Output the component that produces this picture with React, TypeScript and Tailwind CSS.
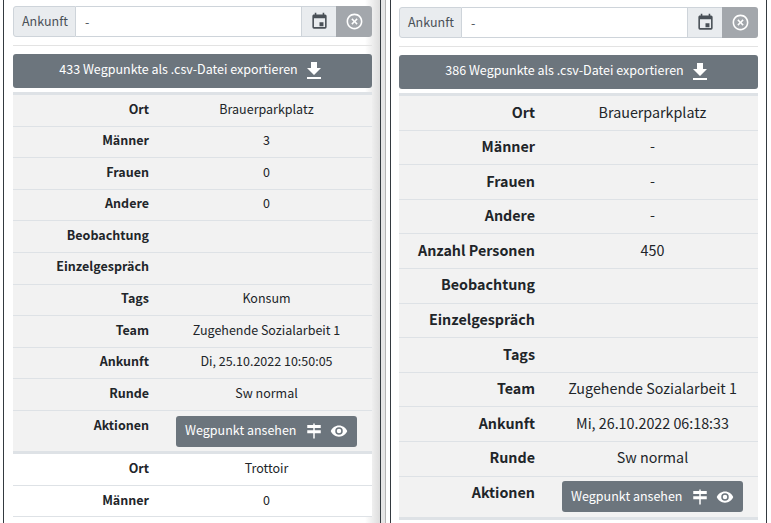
import React from "react";

function Cal() {
  return (
    <svg viewBox="0 0 24 24" className="w-[19px] h-[19px]" fill="currentColor">
      <path d="M19 3h-1V1h-2v2H8V1H6v2H5c-1.11 0-2 .9-2 2v14a2 2 0 0 0 2 2h14a2 2 0 0 0 2-2V5a2 2 0 0 0-2-2zm0 16H5V8h14v11zM12 13v5h5v-5h-5z" />
    </svg>
  );
}
function CloseC() {
  return (
    <svg viewBox="0 0 24 24" className="w-[19px] h-[19px]" fill="currentColor">
      <path d="M12,20C7.59,20 4,16.41 4,12C4,7.59 7.59,4 12,4C16.41,4 20,7.59 20,12C20,16.41 16.41,20 12,20M12,2C6.47,2 2,6.47 2,12C2,17.53 6.47,22 12,22C17.53,22 22,17.53 22,12C22,6.47 17.53,2 12,2M14.59,8L12,10.59L9.41,8L8,9.41L10.59,12L8,14.59L9.41,16L12,13.41L14.59,16L16,14.59L13.41,12L16,9.41L14.59,8Z" />
    </svg>
  );
}
function Down() {
  return (
    <svg viewBox="0 0 24 24" className="w-[24px] h-[24px]" fill="currentColor">
      <path d="M19 9h-4V3H9v6H5l7 7 7-7zM5 18v2h14v-2H5z" />
    </svg>
  );
}
function Sign() {
  return (
    <svg viewBox="0 0 24 24" className="w-[18px] h-[18px]" fill="currentColor">
      <path d="M11 2h2v2h8v4h-8v3h8v4h-8v7h-2v-7H3v-4h8V8H3V4h8z" />
    </svg>
  );
}
function Eye() {
  return (
    <svg viewBox="0 0 24 24" className="w-[18px] h-[18px]" fill="currentColor">
      <path d="M12,9A3,3 0 0,0 9,12A3,3 0 0,0 12,15A3,3 0 0,0 15,12A3,3 0 0,0 12,9M12,17A5,5 0 0,1 7,12A5,5 0 0,1 12,7A5,5 0 0,1 17,12A5,5 0 0,1 12,17M12,4.5C7,4.5 2.73,7.61 1,12C2.73,16.39 7,19.5 12,19.5C17,19.5 21.27,16.39 23,12C21.27,7.61 17,4.5 12,4.5Z" />
    </svg>
  );
}

function Filter() {
  return (
    <div className="flex h-[31px] text-[12.5px] leading-[21px] text-[#495057]">
      <div className="flex items-center pl-[8px] pb-[2px] w-[63px] bg-[#e9ecef] border border-[#ced4da] rounded-l-[3px]">Ankunft</div>
      <div className="flex-1 flex items-center pl-[9px] bg-white border-y border-[#ced4da]">-</div>
      <div className="w-[35px] flex items-center justify-center bg-[#e9ecef] border-y border-l border-[#ced4da]"><Cal /></div>
      <div className="w-[36px] flex items-center justify-center bg-[#a3a7ac] text-white rounded-r-[3px]"><CloseC /></div>
    </div>
  );
}

function Export({ n }: { n: number }) {
  return (
    <div className="mt-[8px] h-[34px] flex items-center justify-center gap-[4px] bg-[#6c757d] text-white text-[12.5px] rounded-[3px]">
      <span className="pb-[3px]">{n} Wegpunkte als .csv-Datei exportieren</span>
      <Down />
    </div>
  );
}

function ActionBtn() {
  return (
    <div className="inline-flex w-[181px] h-[31px] items-center bg-[#6c757d] text-white text-[12.5px] leading-[21px] rounded-[3px] pl-[9px] font-normal align-top">
      <span className="pb-[3px]">Wegpunkt ansehen</span>
      <span className="ml-[9px] mr-[7px]"><Sign /></span>
      <Eye />
    </div>
  );
}

type Row = [string, string];

function Rows({ rows, big, tinted, lower }: { rows: Row[]; big?: boolean; tinted?: boolean; lower?: boolean }) {
  const size = big
    ? "text-[14.3px] leading-[24px] pt-[3.5px] pb-[6.1px]"
    : lower
      ? "text-[12.5px] leading-[21px] pt-[3.5px] pb-[6.1px]"
      : "text-[12.5px] leading-[21px] pt-[2.5px] pb-[7.1px]";
  return (
    <div className={tinted ? "bg-[#f2f2f2]" : "bg-white"}>
      {rows.map(([k, v]) => (
        <div key={k} className={"flex text-[#212529] border-b border-[#dee2e6] " + size}>
          <div className="w-[136px] text-right font-bold shrink-0">{k}</div>
          <div className="flex-1 ml-[12px] text-center">{v}</div>
        </div>
      ))}
    </div>
  );
}

function ActionRow({ big }: { big?: boolean }) {
  const size = big ? "text-[14.3px] leading-[24px] pt-[4.5px] pb-[5px]" : "text-[12.5px] leading-[21px] pt-[5px] pb-[4px]";
  const label = big ? "-mt-[1.5px]" : "-mt-[1.5px]";
  return (
    <div className={"bg-[#f2f2f2] flex text-[#212529] " + size}>
      <div className={"w-[136px] text-right font-bold shrink-0 " + label}>Aktionen</div>
      <div className="flex-1 ml-[12px] text-center"><ActionBtn /></div>
    </div>
  );
}

function Panel({ n, children }: { n: number; children: React.ReactNode }) {
  return (
    <div className="w-[359px]">
      <Filter />
      <div className="border-t border-[#e3e3e3] mt-[8px]" />
      <Export n={n} />
      <div className="mt-[4px] border-t-[3px] border-[#dee2e6]" />
      {children}
    </div>
  );
}

const left1: Row[] = [
  ["Ort", "Brauerparkplatz"],
  ["Männer", "3"],
  ["Frauen", "0"],
  ["Andere", "0"],
  ["Beobachtung", ""],
  ["Einzelgespräch", ""],
  ["Tags", "Konsum"],
  ["Team", "Zugehende Sozialarbeit 1"],
  ["Ankunft", "Di, 25.10.2022 10:50:05"],
  ["Runde", "Sw normal"],
];

const right1: Row[] = [
  ["Ort", "Brauerparkplatz"],
  ["Männer", "-"],
  ["Frauen", "-"],
  ["Andere", "-"],
  ["Anzahl Personen", "450"],
  ["Beobachtung", ""],
  ["Einzelgespräch", ""],
  ["Tags", ""],
  ["Team", "Zugehende Sozialarbeit 1"],
  ["Ankunft", "Mi, 26.10.2022 06:18:33"],
  ["Runde", "Sw normal"],
];

export default function App() {
  return (
    <div
      className="w-[771px] h-[523px] overflow-hidden bg-white flex"
      style={{ fontFamily: '"Noto Sans CJK SC", "Noto Sans", sans-serif' }}
    >
      <div className="w-[378px] shrink-0 ml-[3px] border-l border-r border-[#343a40] pl-[9px] pt-[6px] bg-gradient-to-r from-white from-[96%] to-[#dddddd]">
        <Panel n={433}>
          <Rows rows={left1} tinted />
          <ActionRow />
          <div className="border-t-[3px] border-[#dee2e6]" />
          <Rows rows={[["Ort", "Trottoir"], ["Männer", "0"]]} lower />
        </Panel>
      </div>
      <div className="w-[5px] shrink-0 bg-[#e6e6e6] border-r border-[#b5b5b5]" />
      <div className="w-[4px] shrink-0" />
      <div className="w-[377px] shrink-0 border-l border-r border-[#343a40] pl-[8px] pt-[7px]">
        <Panel n={386}>
          <Rows rows={right1} tinted big />
          <ActionRow big />
          <div className="border-t-[3px] border-[#dee2e6]" />
        </Panel>
      </div>
    </div>
  );
}
